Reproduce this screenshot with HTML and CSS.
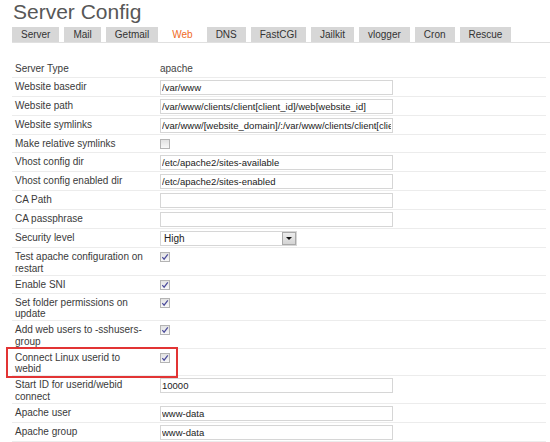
FILE: index.html
```html
<!DOCTYPE html>
<html>
<head>
<meta charset="utf-8">
<title>Server Config</title>
<link rel="stylesheet" href="styles.css">
</head>
<body>
<div class="page">
  <h1 class="title">Server Config</h1>
  <ul class="tabs">
    <li class="tab">Server</li>
    <li class="tab">Mail</li>
    <li class="tab">Getmail</li>
    <li class="tab active">Web</li>
    <li class="tab">DNS</li>
    <li class="tab">FastCGI</li>
    <li class="tab">Jailkit</li>
    <li class="tab">vlogger</li>
    <li class="tab">Cron</li>
    <li class="tab">Rescue</li>
  </ul>
  <div class="form">
    <div class="row"><div class="label">Server Type</div><div class="value plain">apache</div></div>
    <div class="row"><div class="label">Website basedir</div><div class="value"><input class="field" value="/var/www"></div></div>
    <div class="row"><div class="label">Website path</div><div class="value"><input class="field" value="/var/www/clients/client[client_id]/web[website_id]"></div></div>
    <div class="row"><div class="label">Website symlinks</div><div class="value"><input class="field" value="/var/www/[website_domain]/:/var/www/clients/client[client_id]/web[website_id]/"></div></div>
    <div class="row"><div class="label">Make relative symlinks</div><div class="value"><span class="check"></span></div></div>
    <div class="row"><div class="label">Vhost config dir</div><div class="value"><input class="field" value="/etc/apache2/sites-available"></div></div>
    <div class="row"><div class="label">Vhost config enabled dir</div><div class="value"><input class="field" value="/etc/apache2/sites-enabled"></div></div>
    <div class="row"><div class="label">CA Path</div><div class="value"><input class="field" value=""></div></div>
    <div class="row"><div class="label">CA passphrase</div><div class="value"><input class="field" value=""></div></div>
    <div class="row"><div class="label">Security level</div><div class="value"><div class="select"><span class="select-text">High</span><span class="select-btn"><span class="arrow"></span></span></div></div></div>
    <div class="row"><div class="label">Test apache configuration on restart</div><div class="value"><span class="check checked"><svg viewBox="0 0 8 8" class="tick"><path d="M1.3 4.2 L3.1 6.2 L6.8 1.4"/></svg></span></div></div>
    <div class="row"><div class="label">Enable SNI</div><div class="value"><span class="check checked"><svg viewBox="0 0 8 8" class="tick"><path d="M1.3 4.2 L3.1 6.2 L6.8 1.4"/></svg></span></div></div>
    <div class="row"><div class="label">Set folder permissions on update</div><div class="value"><span class="check checked"><svg viewBox="0 0 8 8" class="tick"><path d="M1.3 4.2 L3.1 6.2 L6.8 1.4"/></svg></span></div></div>
    <div class="row"><div class="label">Add web users to -sshusers- group</div><div class="value"><span class="check checked"><svg viewBox="0 0 8 8" class="tick"><path d="M1.3 4.2 L3.1 6.2 L6.8 1.4"/></svg></span></div></div>
    <div class="row"><div class="label">Connect Linux userid to webid</div><div class="value"><span class="check checked"><svg viewBox="0 0 8 8" class="tick"><path d="M1.3 4.2 L3.1 6.2 L6.8 1.4"/></svg></span></div><div class="highlight"></div></div>
    <div class="row"><div class="label">Start ID for userid/webid connect</div><div class="value"><input class="field" value="10000"></div></div>
    <div class="row"><div class="label">Apache user</div><div class="value"><input class="field" value="www-data"></div></div>
    <div class="row"><div class="label">Apache group</div><div class="value"><input class="field" value="www-data"></div></div>
  </div>
</div>
</body>
</html>
```

FILE: styles.css
```css
body {
  margin: 0;
  background: #fff;
  font-family: "Liberation Sans", Arial, sans-serif;
  color: #3a3a3a;
}

.page {
  padding: 0 4px 0 12px;
}

.title {
  margin: 0;
  font-size: 21px;
  line-height: 24px;
  font-weight: normal;
  color: #575757;
  padding-left: 1px;
}

.tabs {
  display: flex;
  gap: 5px;
  margin: 3px -4px 0 0;
  padding: 0;
  list-style: none;
  border-bottom: 1px solid #e0e0e0;
}

.tab {
  height: 15px;
  line-height: 15px;
  padding: 0 9px;
  background: #d7d7d7;
  font-size: 10px;
  color: #333;
}

.tab.active {
  background: #fff;
  color: #f06a1e;
}

.form {
  margin-top: 17px;
}

.row {
  display: grid;
  grid-template-columns: 148px 1fr;
  border-bottom: 1px solid #ececec;
  position: relative;
}

.label {
  padding: 3px 14px 0 3px;
  font-size: 10px;
  line-height: 11.75px;
  color: #3a3a3a;
}

.value {
  padding: 2px 0 1px;
}

.value.plain {
  padding-top: 3px;
  padding-bottom: 2px;
  font-size: 10px;
  line-height: 12px;
  color: #444;
}

.field {
  display: block;
  box-sizing: border-box;
  width: 233px;
  height: 15px;
  margin: 0;
  padding: 0 1px;
  border: 1px solid #d6d6d6;
  background: #fff;
  font-family: "Liberation Sans", Arial, sans-serif;
  font-size: 9.5px;
  color: #222;
  outline: none;
}

.check {
  display: block;
  box-sizing: border-box;
  width: 10px;
  height: 10px;
  margin: 2px 0 2px;
  border: 1px solid #b4b4b4;
  background: linear-gradient(#e2e2e2, #f8f8f8);
}

.tick {
  display: block;
  width: 8px;
  height: 8px;
  fill: none;
  stroke: #4a4a9a;
  stroke-width: 1.2;
}

.select {
  display: flex;
  align-items: center;
  justify-content: space-between;
  box-sizing: border-box;
  width: 137px;
  height: 15px;
  padding-left: 3px;
  border: 1px solid #d6d6d6;
  font-size: 10px;
  color: #222;
}

.select-btn {
  display: flex;
  align-items: center;
  justify-content: center;
  box-sizing: border-box;
  width: 14px;
  height: 13px;
  border: 1px solid #a9a9a9;
  background: linear-gradient(#ececec, #d4d4d4);
}

.arrow {
  width: 0;
  height: 0;
  border-left: 3px solid transparent;
  border-right: 3px solid transparent;
  border-top: 3px solid #111;
}

.highlight {
  position: absolute;
  left: -6px;
  top: -2px;
  width: 172px;
  height: 31px;
  box-sizing: border-box;
  border: 2px solid #e23434;
  pointer-events: none;
}
```
